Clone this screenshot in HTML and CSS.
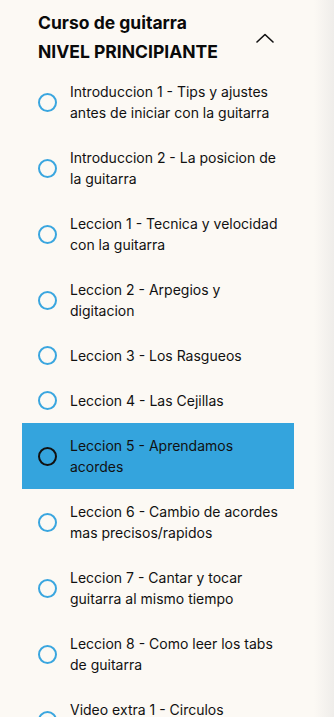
FILE: index.html
```html
<!DOCTYPE html>
<html lang="es">
<head>
  <meta charset="UTF-8" />
  <meta name="viewport" content="width=device-width, initial-scale=1.0">
  <title>Curso de guitarra</title>
  <link rel="stylesheet" href="styles.css">
</head>
<body>
  <div class="page">
    <div class="course">
      <!-- Course header -->
      <div class="course-header">
        <div class="course-title">Curso de guitarra<br>NIVEL PRINCIPIANTE</div>
        <svg class="chevron" width="18" height="10" viewBox="0 0 18 10" fill="none" xmlns="http://www.w3.org/2000/svg">
          <path d="M1 9L9 1.5L17 9" stroke="#111" stroke-width="1.6" stroke-linecap="round" stroke-linejoin="round"/>
        </svg>
      </div>

      <!-- Lessons -->
      <div class="lesson-list">
        <div class="lesson"><span class="lesson-check"></span><span class="lesson-name">Introduccion 1 - Tips y ajustes antes de iniciar con la guitarra</span></div>
        <div class="lesson"><span class="lesson-check"></span><span class="lesson-name">Introduccion 2 - La posicion de la guitarra</span></div>
        <div class="lesson"><span class="lesson-check"></span><span class="lesson-name">Leccion 1 - Tecnica y velocidad con la guitarra</span></div>
        <div class="lesson"><span class="lesson-check"></span><span class="lesson-name">Leccion 2 - Arpegios y digitacion</span></div>
        <div class="lesson"><span class="lesson-check"></span><span class="lesson-name">Leccion 3 - Los Rasgueos</span></div>
        <div class="lesson"><span class="lesson-check"></span><span class="lesson-name">Leccion 4 - Las Cejillas</span></div>
        <div class="lesson active"><span class="lesson-check"></span><span class="lesson-name">Leccion 5 - Aprendamos acordes</span></div>
        <div class="lesson"><span class="lesson-check"></span><span class="lesson-name">Leccion 6 - Cambio de acordes mas precisos/rapidos</span></div>
        <div class="lesson"><span class="lesson-check"></span><span class="lesson-name">Leccion 7 - Cantar y tocar guitarra al mismo tiempo</span></div>
        <div class="lesson"><span class="lesson-check"></span><span class="lesson-name">Leccion 8 - Como leer los tabs de guitarra</span></div>
        <div class="lesson"><span class="lesson-check"></span><span class="lesson-name">Video extra 1 - Circulos armonicos</span></div>
      </div>
    </div>
  </div>
</body>
</html>
```

FILE: styles.css
```css
* {
  margin: 0;
  padding: 0;
  box-sizing: border-box;
  font-family: 'Inter', 'Noto Sans', 'Liberation Sans', sans-serif;
}
html, body {
  height: 100%;
  overflow: hidden;
}
body {
  background-color: #fcf9f4;
  color: #111;
}
.page {
  height: 100%;
  background: linear-gradient(to right, #fcf9f4 0, #fcf9f4 calc(100% - 20px), #efedea 100%);
}
.course {
  width: 272px;
  margin-left: 22px;
}
/* Header */
.course-header {
  display: flex;
  justify-content: space-between;
  align-items: center;
  padding: 8px 20px 3px 16px;
}
.course-title {
  font-size: 17.5px;
  font-weight: 700;
  line-height: 29px;
  color: #0a0a0a;
}
.chevron {
  margin-top: 2px;
}
/* Lesson rows */
.lesson {
  display: flex;
  align-items: center;
  padding: 12px 16px;
}
.lesson-check {
  flex: none;
  width: 19px;
  height: 19px;
  border: 2.4px solid #3aa6df;
  border-radius: 50%;
  margin-right: 13px;
}
.lesson-name {
  font-size: 14px;
  line-height: 21px;
  color: #111;
}
.lesson.active {
  background-color: #34a4dd;
}
.lesson.active .lesson-check {
  border-color: #111;
}
```
